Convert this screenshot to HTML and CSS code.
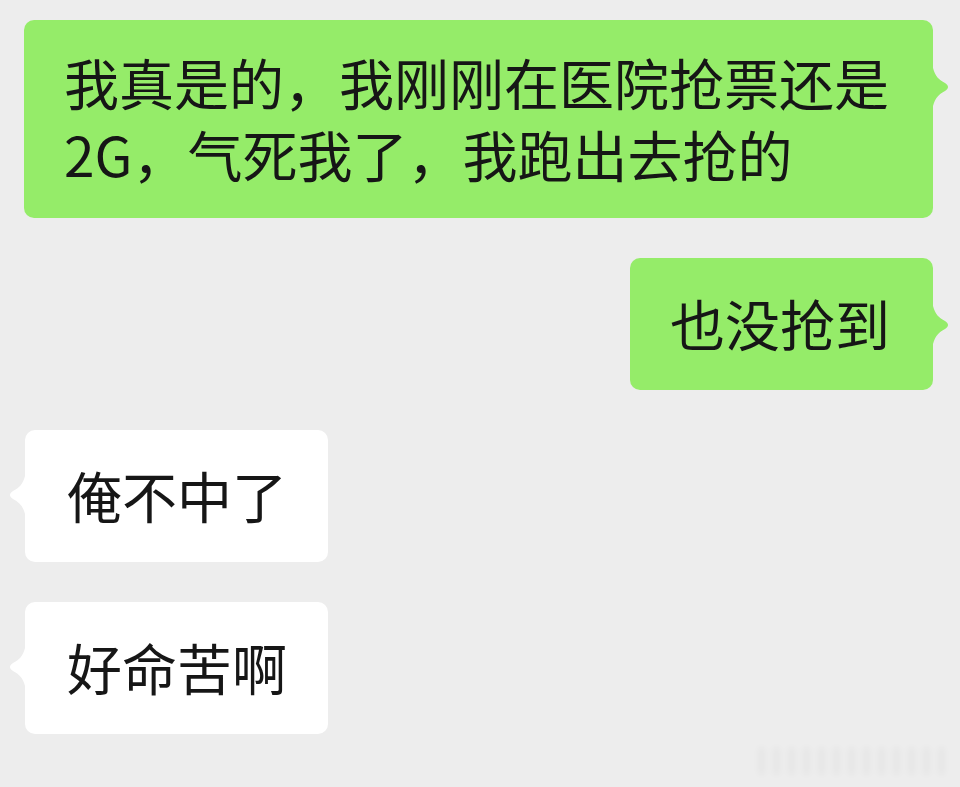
FILE: index.html
```html
<!doctype html>
<html lang="zh-CN">

<head>
    <meta charset="UTF-8" />
    <meta name="viewport" content="width=device-width, initial-scale=1.0" />
    <title>聊天记录</title>
    <link rel="stylesheet" href="styles.css">
</head>

<body>
    <div class="chat">
        <div class="bubble bubble-out">
            <p class="text">我真是的，我刚刚在医院抢票还是2G，气死我了，我跑出去抢的</p>
        </div>

        <div class="bubble bubble-out">
            <p class="text">也没抢到</p>
        </div>

        <div class="bubble bubble-in">
            <p class="text">俺不中了</p>
        </div>

        <div class="bubble bubble-in">
            <p class="text">好命苦啊</p>
        </div>
    </div>

    <div class="watermark" aria-hidden="true"></div>
</body>

</html>
```

FILE: styles.css
```css
:root {
    --bg-color: #ededed;
    --green: #95ec69;
    --text-color: #161616;
    --radius: 10px;
}

* {
    margin: 0;
    padding: 0;
    box-sizing: border-box;
}

body {
    background-color: var(--bg-color);
    color: var(--text-color);
    font-family: "Noto Sans CJK SC", "Noto Sans", sans-serif;
    height: 787px;
    overflow: hidden;
    position: relative;
}

.chat {
    display: flex;
    flex-direction: column;
    gap: 40px;
    padding: 20px 27px 0 24px;
}

.bubble {
    position: relative;
    display: flex;
    align-items: center;
    max-width: 100%;
    min-height: 132px;
    padding: 25px 43px 29px 40px;
    border-radius: var(--radius);
}

.text {
    font-size: 55px;
    line-height: 72px;
}

/* little pointer on the side of each bubble */
.bubble::after {
    content: "";
    position: absolute;
    top: 48px;
    width: 16px;
    height: 38px;
}

.bubble-out {
    align-self: flex-end;
    background-color: var(--green);
}

.bubble-out::after {
    left: 100%;
    background-color: var(--green);
    clip-path: path("M0 0 C2 8 6 12 12 15 C16 17.5 16 20.5 12 23 C6 26 2 30 0 38 Z");
}

.bubble-in {
    align-self: flex-start;
    margin-left: 1px;
    padding: 25px 41px 29px 42px;
    background-color: #fff;
}

.bubble-in::after {
    right: 100%;
    top: 46px;
    background-color: #fff;
    clip-path: path("M16 0 C14 8 10 12 4 15 C0 17.5 0 20.5 4 23 C10 26 14 30 16 38 Z");
}

.watermark {
    position: absolute;
    right: 12px;
    bottom: 12px;
    width: 190px;
    height: 28px;
    opacity: 0.3;
    filter: blur(3px);
    background: repeating-linear-gradient(90deg,
            rgba(0, 0, 0, 0.1) 0 7px,
            transparent 7px 15px);
}
```
